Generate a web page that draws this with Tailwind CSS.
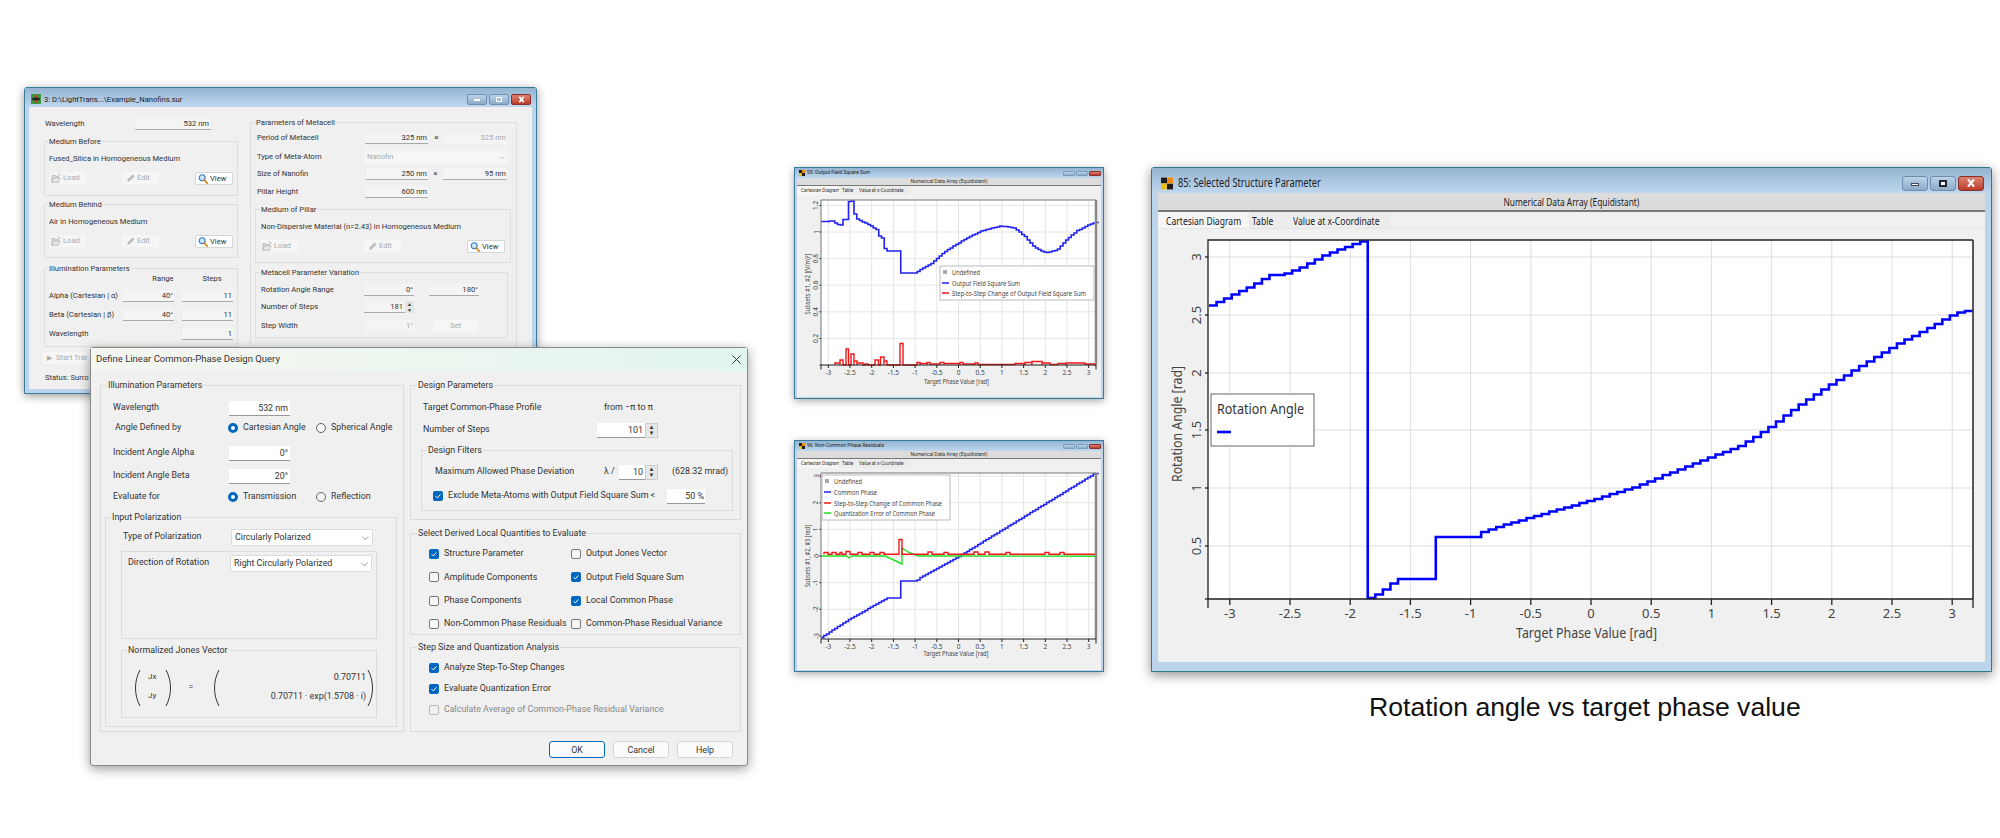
<!DOCTYPE html>
<html lang="en">
<head>
  <meta charset="UTF-8" />
  <title>Linear Common-Phase Design Query</title>
  <script src="https://cdn.jsdelivr.net/npm/@tailwindcss/browser@4"></script>
</head>
<body class="bg-white">
<svg class="hidden">
  <symbol id="folder" viewBox="0 0 12 12"><path d="M1 3h4l1 1h3v7H1z" fill="#d8d8d8" stroke="#aaa" stroke-width=".7"/><path d="M3 6h8l-2 5H1z" fill="#e6e6e6" stroke="#aaa" stroke-width=".7"/><path d="M8 1l3 1-1 2" fill="none" stroke="#bbb"/></symbol>
  <symbol id="pencil" viewBox="0 0 12 12"><path d="M2 10l1-3 6-6 2 2-6 6z" fill="#bdbdbd" stroke="#aaa" stroke-width=".6"/></symbol>
  <symbol id="lens" viewBox="0 0 12 12"><circle cx="5" cy="4.5" r="3.6" fill="#cfe6fb" stroke="#2a78c8" stroke-width="1.3"/><path d="M7.6 7.3l3.4 3.6" stroke="#d88a1c" stroke-width="2.2" stroke-linecap="round"/></symbol>
  <symbol id="check" viewBox="0 0 10 10"><path d="M2.6 5.2l1.7 1.7 3.1-3.5" fill="none" stroke="#fff" stroke-width="1"/></symbol>
  <symbol id="paren" viewBox="0 0 8 38" preserveAspectRatio="none"><path d="M7 1C1 12 1 26 7 37" fill="none" stroke="#333" stroke-width="1"/></symbol>
  <symbol id="appicon" viewBox="0 0 8 8"><rect width="8" height="8" fill="#fff"/><rect width="4" height="4" fill="#1d1d1d"/><rect x="4" y="4" width="4" height="4" fill="#1d1d1d"/><rect x="4" width="4" height="4" fill="#e8891a"/><rect y="4" width="4" height="4" fill="#e8c01a"/></symbol>
  <symbol id="closex" viewBox="0 0 10 8"><path d="M2.5 1l5 6M7.5 1l-5 6" stroke="#fff" stroke-width="1.8"/></symbol>
</svg>

<main class="relative w-[2000px] h-[838px] overflow-hidden bg-white font-['Roboto',sans-serif] text-[#333] whitespace-nowrap">

  <!-- back window: surface parameters -->
  <section class="absolute left-[24px] top-[87px] w-[513px] h-[307px] border border-[#3c7a99] rounded-t-[3px] bg-[#bcd4ec] shadow-[0_2px_10px_rgba(0,0,0,.4)] flex flex-col text-[7.6px]">
    <div class="h-[19px] shrink-0 bg-linear-to-b from-[#94b4d2] to-[#c0d7ee] flex items-center pt-[4px] pl-[6px] pr-[5px] justify-between">
      <div class="flex items-center gap-[3px] text-[7.6px] text-[#222]">
        <svg class="w-[10px] h-[10px]" viewBox="0 0 8 8"><rect width="8" height="8" fill="#3c9a3c"/><rect x="3" y="1" width="2" height="6" fill="#c9302c"/><rect x="1" y="3" width="6" height="2" fill="#222"/></svg>
        <span>3: D:\LightTrans...\Example_Nanofins.sur</span>
      </div>
      <div class="flex gap-[2px]">
        <span class="w-[20px] h-[11px] rounded-[2px] bg-linear-to-b from-[#bcd2e7] to-[#8dabca] border border-[#6f8db0] flex items-center justify-center"><span class="w-[6px] h-[2px] bg-white"></span></span>
        <span class="w-[20px] h-[11px] rounded-[2px] bg-linear-to-b from-[#bcd2e7] to-[#8dabca] border border-[#6f8db0] flex items-center justify-center"><span class="w-[6px] h-[5px] border border-white"></span></span>
        <span class="w-[20px] h-[11px] rounded-[2px] bg-linear-to-b from-[#db8272] to-[#b93a2a] border border-[#8c2f26] flex items-center justify-center"><svg class="w-[9px] h-[7px]"><use href="#closex"/></svg></span>
      </div>
    </div>
    <div class="mx-[4px] h-[282px] bg-[#f0f0f0] flex gap-[12px] pl-[15px]">
      <div class="w-[194px] shrink-0">
        <div class="flex items-center h-[12px] mt-[11px]">
          <span class="w-[91px] pl-[1px]">Wavelength</span>
          <span class="w-[76px] h-[12px] leading-[12px] text-right pr-[2px] bg-[#f4f4f4] border-b border-[#aaa]">532 nm</span>
        </div>

        <div class="relative mt-[11px] h-[55px] border border-[#dedede] pl-[4px]">
          <span class="absolute -top-[7px] left-[3px] bg-[#f0f0f0] px-[1px] leading-[13px]">Medium Before</span>
          <p class="mt-[11px] leading-[12px]">Fused_Silica in Homogeneous Medium</p>
          <div class="flex justify-between mt-[7px] mr-[4px] ml-[1px]">
            <span class="w-[36px] h-[12px] flex items-center gap-[2px] pl-[1px] bg-[#f6f6f6] text-[#aaa]"><svg class="w-[10px] h-[10px]"><use href="#folder"/></svg>Load</span>
            <span class="w-[37px] h-[12px] flex items-center gap-[2px] pl-[4px] bg-[#f6f6f6] text-[#aaa]"><svg class="w-[9px] h-[9px]"><use href="#pencil"/></svg>Edit</span>
            <span class="w-[38px] h-[13px] flex items-center gap-[2px] pl-[2px] bg-white border border-[#d5d5d5] rounded-[2px]"><svg class="w-[10px] h-[10px]"><use href="#lens"/></svg>View</span>
          </div>
        </div>

        <div class="relative mt-[8px] h-[54px] border border-[#dedede] pl-[4px]">
          <span class="absolute -top-[7px] left-[3px] bg-[#f0f0f0] px-[1px] leading-[13px]">Medium Behind</span>
          <p class="mt-[11px] leading-[12px]">Air in Homogeneous Medium</p>
          <div class="flex justify-between mt-[7px] mr-[4px] ml-[1px]">
            <span class="w-[36px] h-[12px] flex items-center gap-[2px] pl-[1px] bg-[#f6f6f6] text-[#aaa]"><svg class="w-[10px] h-[10px]"><use href="#folder"/></svg>Load</span>
            <span class="w-[37px] h-[12px] flex items-center gap-[2px] pl-[4px] bg-[#f6f6f6] text-[#aaa]"><svg class="w-[9px] h-[9px]"><use href="#pencil"/></svg>Edit</span>
            <span class="w-[38px] h-[13px] flex items-center gap-[2px] pl-[2px] bg-white border border-[#d5d5d5] rounded-[2px]"><svg class="w-[10px] h-[10px]"><use href="#lens"/></svg>View</span>
          </div>
        </div>

        <div class="relative mt-[10px] h-[79px] border border-[#dedede] pl-[4px]">
          <span class="absolute -top-[7px] left-[3px] bg-[#f0f0f0] px-[1px] leading-[13px]">Illumination Parameters</span>
          <div class="flex mt-[4px] h-[12px] leading-[12px]"><span class="ml-[94px] w-[40px] text-center">Range</span><span class="ml-[9px] w-[40px] text-center">Steps</span></div>
          <div class="flex items-center h-[12px] mt-[5px]"><span class="w-[74px]">Alpha (Cartesian | α)</span><span class="w-[51px] h-[12px] leading-[12px] text-right pr-[1px] bg-[#f4f4f4] border-b border-[#aaa]">40°</span><span class="ml-[8px] w-[51px] h-[12px] leading-[12px] text-right pr-[1px] bg-[#f4f4f4] border-b border-[#aaa]">11</span></div>
          <div class="flex items-center h-[12px] mt-[7px]"><span class="w-[74px]">Beta (Cartesian | β)</span><span class="w-[51px] h-[12px] leading-[12px] text-right pr-[1px] bg-[#f4f4f4] border-b border-[#aaa]">40°</span><span class="ml-[8px] w-[51px] h-[12px] leading-[12px] text-right pr-[1px] bg-[#f4f4f4] border-b border-[#aaa]">11</span></div>
          <div class="flex items-center h-[12px] mt-[7px]"><span class="w-[133px]">Wavelength</span><span class="w-[51px] h-[12px] leading-[12px] text-right pr-[1px] bg-[#f4f4f4] border-b border-[#aaa]">1</span></div>
        </div>

        <div class="mt-[5px] ml-[-1px] w-[60px] h-[12px] flex items-center gap-[4px] pl-[4px] bg-[#f6f6f6] text-[#aaa]"><span class="text-[7px]">▶</span><span>Start Trai</span></div>
        <p class="mt-[8px] ml-[1px] leading-[12px]">Status: Surro</p>
      </div>

      <div class="w-[267px] pt-[15px]">
        <div class="relative h-[235px] border border-[#dedede] pl-[6px]">
          <span class="absolute -top-[7px] left-[4px] bg-[#f0f0f0] px-[1px] leading-[13px]">Parameters of Metacell</span>
          <div class="flex items-center h-[12px] mt-[9px]"><span class="w-[108px]">Period of Metacell</span><span class="w-[63px] h-[12px] leading-[12px] text-right pr-[1px] bg-[#f4f4f4] border-b border-[#aaa]">325 nm</span><span class="w-[17px] text-center text-[8px]">×</span><span class="w-[62px] h-[12px] leading-[12px] text-right pr-[1px] bg-[#f4f4f4] text-[#aaa]">325 nm</span></div>
          <div class="flex items-center h-[12px] mt-[7px]"><span class="w-[108px]">Type of Meta-Atom</span><span class="w-[142px] h-[12px] leading-[12px] pl-[2px] bg-[#f6f6f6] text-[#aaa] flex justify-between pr-[2px]">Nanofin<span>⌵</span></span></div>
          <div class="flex items-center h-[12px] mt-[5px]"><span class="w-[109px]">Size of Nanofin</span><span class="w-[62px] h-[12px] leading-[12px] text-right pr-[1px] bg-[#f4f4f4] border-b border-[#aaa]">250 nm</span><span class="w-[15px] text-center text-[8px]">×</span><span class="w-[64px] h-[12px] leading-[12px] text-right pr-[1px] bg-[#f4f4f4] border-b border-[#aaa]">95 nm</span></div>
          <div class="flex items-center h-[12px] mt-[6px]"><span class="w-[108px]">Pillar Height</span><span class="w-[63px] h-[12px] leading-[12px] text-right pr-[1px] bg-[#f4f4f4] border-b border-[#aaa]">600 nm</span></div>

          <div class="relative mt-[11px] ml-[-2px] w-[256px] h-[54px] border border-[#dedede] pl-[5px]">
            <span class="absolute -top-[7px] left-[4px] bg-[#f0f0f0] px-[1px] leading-[13px]">Medium of Pillar</span>
            <p class="mt-[11px] leading-[12px]">Non-Dispersive Material (n=2.43) in Homogeneous Medium</p>
            <div class="flex justify-between mt-[7px] mr-[5px]">
              <span class="w-[37px] h-[12px] flex items-center gap-[2px] pl-[1px] bg-[#f6f6f6] text-[#aaa]"><svg class="w-[10px] h-[10px]"><use href="#folder"/></svg>Load</span>
              <span class="w-[37px] h-[12px] flex items-center gap-[2px] pl-[4px] bg-[#f6f6f6] text-[#aaa]"><svg class="w-[9px] h-[9px]"><use href="#pencil"/></svg>Edit</span>
              <span class="w-[38px] h-[13px] flex items-center gap-[2px] pl-[2px] bg-white border border-[#d5d5d5] rounded-[2px]"><svg class="w-[10px] h-[10px]"><use href="#lens"/></svg>View</span>
            </div>
          </div>

          <div class="relative mt-[9px] ml-[-2px] w-[253px] h-[66px] border border-[#dedede] pl-[5px]">
            <span class="absolute -top-[7px] left-[4px] bg-[#f0f0f0] px-[1px] leading-[13px]">Metacell Parameter Variation</span>
            <div class="flex items-center h-[12px] mt-[11px]"><span class="w-[103px]">Rotation Angle Range</span><span class="w-[50px] h-[12px] leading-[12px] text-right pr-[1px] bg-[#f4f4f4] border-b border-[#aaa]">0°</span><span class="ml-[15px] w-[50px] h-[12px] leading-[12px] text-right pr-[1px] bg-[#f4f4f4] border-b border-[#aaa]">180°</span></div>
            <div class="flex items-center h-[12px] mt-[5px]"><span class="w-[103px]">Number of Steps</span><span class="w-[41px] h-[12px] leading-[12px] text-right pr-[2px] bg-[#f4f4f4] border-b border-[#aaa]">181</span><span class="w-[9px] h-[12px] bg-[#e4e4e4] text-[5px] leading-[6px] text-center">▲<br>▼</span></div>
            <div class="flex items-center h-[12px] mt-[7px]"><span class="w-[103px]">Step Width</span><span class="w-[50px] h-[12px] leading-[12px] text-right pr-[1px] bg-[#f4f4f4] text-[#aaa]">1°</span><span class="ml-[19px] w-[45px] h-[12px] leading-[12px] text-center bg-[#f6f6f6] text-[#aaa]">Set</span></div>
          </div>
        </div>
      </div>
    </div>
  </section>

  <!-- design query dialog -->
  <section class="absolute left-[90px] top-[347px] w-[658px] h-[419px] border border-[#8a8a8a] rounded-[3px] bg-[#f0f0f0] shadow-[0_3px_12px_rgba(0,0,0,.4)] flex flex-col text-[8.9px]">
    <div class="h-[23px] shrink-0 bg-linear-to-r from-[#f5f6f0] to-[#e2f5ee] flex items-center justify-between pl-[5px] pr-[6px] text-[9.5px]">
      <span>Define Linear Common-Phase Design Query</span>
      <svg class="w-[9px] h-[9px]" viewBox="0 0 9 9"><path d="M.5.5l8 8M8.5.5l-8 8" stroke="#333" stroke-width="1"/></svg>
    </div>
    <div class="flex gap-[6px] pl-[9px] pt-[14px]">
      <div class="relative w-[304px] h-[347px] shrink-0 border border-[#dcdcdc]">
        <span class="absolute -top-[8px] left-[6px] bg-[#f0f0f0] px-[1px] leading-[14px]">Illumination Parameters</span>
        <div class="flex items-center h-[16px] mt-[14px] pl-[12px]"><span class="w-[116px]">Wavelength</span><span class="w-[61px] h-[15px] leading-[15px] text-right pr-[2px] bg-white border-b border-[#999]">532 nm</span></div>
        <div class="flex items-center h-[16px] mt-[4px] pl-[14px]"><span class="w-[113px]">Angle Defined by</span><span class="w-[10px] h-[10px] shrink-0 rounded-full border-[3px] border-[#0067c0] bg-white"></span><span class="ml-[5px] w-[73px]">Cartesian Angle</span><span class="w-[10px] h-[10px] shrink-0 rounded-full border border-[#666] bg-[#f6f6f6]"></span><span class="ml-[5px]">Spherical Angle</span></div>
        <div class="flex items-center h-[16px] mt-[9px] pl-[12px]"><span class="w-[116px]">Incident Angle Alpha</span><span class="w-[61px] h-[15px] leading-[15px] text-right pr-[2px] bg-white border-b border-[#999]">0°</span></div>
        <div class="flex items-center h-[16px] mt-[7px] pl-[12px]"><span class="w-[116px]">Incident Angle Beta</span><span class="w-[61px] h-[15px] leading-[15px] text-right pr-[2px] bg-white border-b border-[#999]">20°</span></div>
        <div class="flex items-center h-[16px] mt-[5px] pl-[12px]"><span class="w-[115px]">Evaluate for</span><span class="w-[10px] h-[10px] shrink-0 rounded-full border-[3px] border-[#0067c0] bg-white"></span><span class="ml-[5px] w-[73px]">Transmission</span><span class="w-[10px] h-[10px] shrink-0 rounded-full border border-[#666] bg-[#f6f6f6]"></span><span class="ml-[5px]">Reflection</span></div>

        <div class="relative mt-[12px] ml-[4px] w-[292px] h-[210px] border border-[#dcdcdc]">
          <span class="absolute -top-[8px] left-[5px] bg-[#f0f0f0] px-[1px] leading-[14px]">Input Polarization</span>
          <div class="flex items-center h-[16px] mt-[11px] pl-[17px]"><span class="w-[109px]">Type of Polarization</span><span class="w-[140px] h-[15px] leading-[15px] pl-[3px] pr-[3px] bg-white shadow-[0_0_1px_rgba(0,0,0,.5)] flex justify-between">Circularly Polarized<span>⌵</span></span></div>
          <div class="mt-[6px] ml-[15px] w-[256px] h-[88px] border border-[#dcdcdc]">
            <div class="flex items-center h-[16px] mt-[3px] pl-[6px]"><span class="w-[103px]">Direction of Rotation</span><span class="w-[140px] h-[15px] leading-[15px] pl-[3px] pr-[3px] bg-white shadow-[0_0_1px_rgba(0,0,0,.5)] flex justify-between">Right Circularly Polarized<span>⌵</span></span></div>
          </div>
          <div class="relative mt-[11px] ml-[15px] w-[256px] h-[68px] border border-[#dcdcdc] flex pl-[11px] pt-[18px]">
            <span class="absolute -top-[8px] left-[5px] bg-[#f0f0f0] px-[1px] leading-[14px]">Normalized Jones Vector</span>
            <svg class="w-[8px] h-[38px]"><use href="#paren"/></svg>
            <div class="ml-[7px] w-[14px] h-[38px] flex flex-col justify-between pt-[2px] pb-[5px] text-[8px] leading-[12px]"><span>Jx</span><span>Jy</span></div>
            <svg class="ml-[3px] w-[8px] h-[38px] -scale-x-100"><use href="#paren"/></svg>
            <span class="ml-[15px] w-[6px] h-[38px] leading-[36px] text-center">=</span>
            <svg class="ml-[18px] w-[8px] h-[38px]"><use href="#paren"/></svg>
            <div class="w-[146px] h-[38px] flex flex-col justify-between pt-[2px] pb-[5px] text-right leading-[12px]"><span>0.70711</span><span>0.70711 · exp(1.5708 · i)</span></div>
            <svg class="ml-[1px] w-[8px] h-[38px] -scale-x-100"><use href="#paren"/></svg>
          </div>
        </div>
      </div>

      <div class="w-[331px] flex flex-col">
        <div class="relative h-[135px] border border-[#dcdcdc]">
          <span class="absolute -top-[8px] left-[6px] bg-[#f0f0f0] px-[1px] leading-[14px]">Design Parameters</span>
          <div class="flex items-center h-[16px] mt-[14px] pl-[12px]"><span class="w-[181px]">Target Common-Phase Profile</span><span>from −π to π</span></div>
          <div class="flex items-center h-[16px] mt-[6px] pl-[12px]"><span class="w-[174px]">Number of Steps</span><span class="w-[48px] h-[15px] leading-[15px] text-right pr-[2px] bg-white border-b border-[#999]">101</span><span class="w-[13px] h-[15px] bg-[#e6e6e6] border border-[#ccc] text-[6px] leading-[6px] text-center">▲<br>▼</span></div>
          <div class="relative mt-[12px] ml-[10px] w-[312px] h-[61px] border border-[#dcdcdc]">
            <span class="absolute -top-[8px] left-[5px] bg-[#f0f0f0] px-[1px] leading-[14px]">Design Filters</span>
            <div class="flex items-center h-[16px] mt-[13px] pl-[13px]"><span class="w-[169px]">Maximum Allowed Phase Deviation</span><span class="w-[15px]">λ /</span><span class="w-[26px] h-[15px] leading-[15px] text-right pr-[2px] bg-white border-b border-[#999]">10</span><span class="w-[13px] h-[15px] bg-[#e6e6e6] border border-[#ccc] text-[6px] leading-[6px] text-center">▲<br>▼</span><span class="ml-[14px]">(628.32 mrad)</span></div>
            <div class="flex items-center h-[16px] mt-[8px] pl-[11px]"><svg class="w-[10px] h-[10px] shrink-0 rounded-[2px] bg-[#0067c0]"><use href="#check"/></svg><span class="ml-[5px] w-[219px]">Exclude Meta-Atoms with Output Field Square Sum &lt;</span><span class="w-[38px] h-[15px] leading-[15px] text-right pr-[1px] bg-white border-b border-[#999]">50 %</span></div>
          </div>
        </div>

        <div class="relative mt-[13px] h-[102px] border border-[#dcdcdc] grid grid-cols-[142px_1fr] gap-y-[5px] pt-[12px] pl-[18px]">
          <span class="absolute -top-[8px] left-[6px] bg-[#f0f0f0] px-[1px] leading-[14px]">Select Derived Local Quantities to Evaluate</span>
          <label class="flex items-center gap-[5px] h-[16px]"><svg class="w-[10px] h-[10px] shrink-0 rounded-[2px] bg-[#0067c0]"><use href="#check"/></svg>Structure Parameter</label>
          <label class="flex items-center gap-[5px] h-[16px]"><span class="w-[10px] h-[10px] shrink-0 rounded-[2px] border border-[#777] bg-[#f6f6f6]"></span>Output Jones Vector</label>
          <label class="flex items-center gap-[5px] h-[16px]"><span class="w-[10px] h-[10px] shrink-0 rounded-[2px] border border-[#777] bg-[#f6f6f6]"></span>Amplitude Components</label>
          <label class="flex items-center gap-[5px] h-[16px]"><svg class="w-[10px] h-[10px] shrink-0 rounded-[2px] bg-[#0067c0]"><use href="#check"/></svg>Output Field Square Sum</label>
          <label class="flex items-center gap-[5px] h-[16px]"><span class="w-[10px] h-[10px] shrink-0 rounded-[2px] border border-[#777] bg-[#f6f6f6]"></span>Phase Components</label>
          <label class="flex items-center gap-[5px] h-[16px]"><svg class="w-[10px] h-[10px] shrink-0 rounded-[2px] bg-[#0067c0]"><use href="#check"/></svg>Local Common Phase</label>
          <label class="flex items-center gap-[5px] h-[16px]"><span class="w-[10px] h-[10px] shrink-0 rounded-[2px] border border-[#777] bg-[#f6f6f6]"></span>Non-Common Phase Residuals</label>
          <label class="flex items-center gap-[5px] h-[16px]"><span class="w-[10px] h-[10px] shrink-0 rounded-[2px] border border-[#777] bg-[#f6f6f6]"></span>Common-Phase Residual Variance</label>
        </div>

        <div class="relative mt-[12px] h-[85px] border border-[#dcdcdc] flex flex-col gap-[5px] pt-[12px] pl-[18px]">
          <span class="absolute -top-[8px] left-[6px] bg-[#f0f0f0] px-[1px] leading-[14px]">Step Size and Quantization Analysis</span>
          <label class="flex items-center gap-[5px] h-[16px]"><svg class="w-[10px] h-[10px] shrink-0 rounded-[2px] bg-[#0067c0]"><use href="#check"/></svg>Analyze Step-To-Step Changes</label>
          <label class="flex items-center gap-[5px] h-[16px]"><svg class="w-[10px] h-[10px] shrink-0 rounded-[2px] bg-[#0067c0]"><use href="#check"/></svg>Evaluate Quantization Error</label>
          <label class="flex items-center gap-[5px] h-[16px] text-[#888]"><span class="w-[10px] h-[10px] shrink-0 rounded-[2px] border border-[#bbb] bg-[#f0f0f0]"></span>Calculate Average of Common-Phase Residual Variance</label>
        </div>
      </div>
    </div>
    <div class="flex justify-end gap-[8px] mt-[9px] pr-[14px]">
      <button class="w-[56px] h-[17px] rounded-[3px] border border-[#0067c0] bg-[#fbfbfb] leading-[14px]">OK</button>
      <button class="w-[56px] h-[17px] rounded-[3px] border border-[#d5d5d5] bg-[#fbfbfb] leading-[14px]">Cancel</button>
      <button class="w-[56px] h-[17px] rounded-[3px] border border-[#d5d5d5] bg-[#fbfbfb] leading-[14px]">Help</button>
    </div>
  </section>

  <!-- small chart: output field square sum -->
  <section class="absolute left-[794px] top-[167px] w-[310px] h-[232px] border border-[#3c7a99] bg-[#bcd4ec] shadow-[0_2px_8px_rgba(0,0,0,.35)] flex flex-col">
    <div class="h-[10px] shrink-0 bg-linear-to-b from-[#94b4d2] to-[#c0d7ee] flex items-center justify-between pl-[4px] pr-[2px] text-[5px] text-[#222]">
      <div class="flex items-center gap-[2px]"><svg class="w-[6px] h-[6px]"><use href="#appicon"/></svg><span>95: Output Field Square Sum</span></div>
      <div class="flex gap-[1px]">
        <span class="w-[12px] h-[5px] rounded-[1px] bg-linear-to-b from-[#bcd2e7] to-[#8dabca] border border-[#7a9dbf]"></span>
        <span class="w-[12px] h-[5px] rounded-[1px] bg-linear-to-b from-[#bcd2e7] to-[#8dabca] border border-[#7a9dbf]"></span>
        <span class="w-[12px] h-[5px] rounded-[1px] bg-linear-to-b from-[#db8272] to-[#b93a2a] border border-[#8c2f26]"></span>
      </div>
    </div>
    <div class="mx-[2px] h-[219px] bg-[#f0f0f0] flex flex-col">
      <div class="h-[8px] shrink-0 bg-[#dcdcdc] border-b border-[#777] text-center text-[5px] leading-[7px]">Numerical Data Array (Equidistant)</div>
      <div class="h-[9px] shrink-0 flex text-[4.7px] leading-[9px]"><span class="w-[42px] pl-[4px] bg-[#f6f6f6]">Cartesian Diagram</span><span class="w-[19px] pl-[3px] bg-[#ececec]">Table</span><span class="w-[52px] pl-[1px] bg-[#ececec]">Value at x-Coordinate</span></div>
      <svg id="chart95" class="w-[304px] h-[200px] font-['Noto_Sans',sans-serif]" viewBox="797 196 304 200"></svg>
    </div>
  </section>

  <!-- small chart: non-common phase residuals -->
  <section class="absolute left-[794px] top-[440px] w-[310px] h-[232px] border border-[#3c7a99] bg-[#bcd4ec] shadow-[0_2px_8px_rgba(0,0,0,.35)] flex flex-col">
    <div class="h-[10px] shrink-0 bg-linear-to-b from-[#94b4d2] to-[#c0d7ee] flex items-center justify-between pl-[4px] pr-[2px] text-[5px] text-[#222]">
      <div class="flex items-center gap-[2px]"><svg class="w-[6px] h-[6px]"><use href="#appicon"/></svg><span>96: Non-Common Phase Residuals</span></div>
      <div class="flex gap-[1px]">
        <span class="w-[12px] h-[5px] rounded-[1px] bg-linear-to-b from-[#bcd2e7] to-[#8dabca] border border-[#7a9dbf]"></span>
        <span class="w-[12px] h-[5px] rounded-[1px] bg-linear-to-b from-[#bcd2e7] to-[#8dabca] border border-[#7a9dbf]"></span>
        <span class="w-[12px] h-[5px] rounded-[1px] bg-linear-to-b from-[#db8272] to-[#b93a2a] border border-[#8c2f26]"></span>
      </div>
    </div>
    <div class="mx-[2px] h-[219px] bg-[#f0f0f0] flex flex-col">
      <div class="h-[8px] shrink-0 bg-[#dcdcdc] border-b border-[#777] text-center text-[5px] leading-[7px]">Numerical Data Array (Equidistant)</div>
      <div class="h-[9px] shrink-0 flex text-[4.7px] leading-[9px]"><span class="w-[42px] pl-[4px] bg-[#f6f6f6]">Cartesian Diagram</span><span class="w-[19px] pl-[3px] bg-[#ececec]">Table</span><span class="w-[52px] pl-[1px] bg-[#ececec]">Value at x-Coordinate</span></div>
      <svg id="chart96" class="w-[304px] h-[200px] font-['Noto_Sans',sans-serif]" viewBox="797 469 304 200"></svg>
    </div>
  </section>

  <!-- big chart: selected structure parameter -->
  <section class="absolute left-[1151px] top-[167px] w-[841px] h-[505px] border border-[#2d7a8c] rounded-t-[3px] bg-[#bcd4ec] shadow-[0_3px_12px_rgba(0,0,0,.45)] flex flex-col">
    <div class="h-[25px] shrink-0 bg-linear-to-b from-[#94b4d2] to-[#c0d7ee] flex items-center justify-between pt-[5px] pl-[9px] pr-[7px]">
      <div class="flex items-center gap-[5px]">
        <svg class="w-[12px] h-[13px]" preserveAspectRatio="none"><use href="#appicon"/></svg>
        <span class="text-[12px] text-[#222] origin-left scale-x-[.77] font-['Noto_Sans',sans-serif]">85: Selected Structure Parameter</span>
      </div>
      <div class="flex gap-[2px]">
        <span class="w-[26px] h-[15px] rounded-[3px] bg-linear-to-b from-[#bcd2e7] to-[#8dabca] border border-[#6f8db0] flex items-center justify-center"><span class="w-[8px] h-[3px] mt-[3px] bg-white border border-[#446]"></span></span>
        <span class="w-[26px] h-[15px] rounded-[3px] bg-linear-to-b from-[#bcd2e7] to-[#8dabca] border border-[#6f8db0] flex items-center justify-center"><span class="w-[8px] h-[7px] border-2 border-[#223] bg-white"></span></span>
        <span class="w-[26px] h-[15px] rounded-[3px] bg-linear-to-b from-[#db8272] to-[#b93a2a] border border-[#8c2f26] flex items-center justify-center"><svg class="w-[12px] h-[10px]"><use href="#closex"/></svg></span>
      </div>
    </div>
    <div class="mx-[6px] h-[469px] bg-[#f0f0f0] flex flex-col font-['Noto_Sans',sans-serif]">
      <div class="h-[19px] shrink-0 bg-[#dcdcdc] border-b-2 border-[#777] text-center text-[11px] leading-[17px] text-[#222]"><span class="inline-block scale-x-[.76]">Numerical Data Array (Equidistant)</span></div>
      <div class="h-[17px] shrink-0 flex text-[11px] leading-[17px] border-b border-[#e6e6e6] text-[#222]">
        <span class="w-[91px] pl-[8px] bg-[#f6f6f6]"><span class="inline-block origin-left scale-x-[.78]">Cartesian Diagram</span></span>
        <span class="w-[39px] pl-[3px] bg-[#ececec]"><span class="inline-block origin-left scale-x-[.78]">Table</span></span>
        <span class="w-[102px] pl-[5px] bg-[#ececec]"><span class="inline-block origin-left scale-x-[.78]">Value at x-Coordinate</span></span>
      </div>
      <svg id="chart85" class="w-[827px] h-[431px]" viewBox="1158 229 827 431"></svg>
    </div>
  </section>

  <p class="absolute left-[1369px] top-[691px] font-['Liberation_Sans',sans-serif] text-[26.6px] leading-[32px] text-[#111]">Rotation angle vs target phase value</p>
</main>

<script>
  const NS = 'http://www.w3.org/2000/svg';

  function add(svg, tag, attrs, text) {
    const el = document.createElementNS(NS, tag);
    for (const k in attrs) el.setAttribute(k, attrs[k]);
    if (text !== undefined) el.textContent = text;
    svg.appendChild(el);
    return el;
  }

  function interp(cps, x) {
    if (x <= cps[0][0]) return cps[0][1];
    for (let i = 1; i < cps.length; i++) {
      if (x <= cps[i][0]) {
        const a = cps[i - 1], b = cps[i];
        return a[1] + (b[1] - a[1]) * (x - a[0]) / (b[0] - a[0]);
      }
    }
    return cps[cps.length - 1][1];
  }

  // data arrays have 101 equidistant samples, drawn as steps
  function stairs(cps, x0, step) {
    let d = '';
    for (let k = 0; k <= 100; k++) {
      const y = Math.round(interp(cps, x0 + (k + 0.5) * step) * 2) / 2;
      d += (k === 0 ? 'M' + x0 + ' ' + y : 'V' + y) + 'H' + (x0 + (k + 1) * step);
    }
    return d;
  }

  function boxes(base, list) {
    let d = 'M' + list[0][0] + ' ' + base;
    for (const [a, b, y] of list) d += 'H' + a + 'V' + y + 'H' + b + 'V' + base;
    return d;
  }

  function frame(svg, c) {
    add(svg, 'rect', { x: c.l, y: c.t, width: c.r - c.l, height: c.b - c.t, fill: '#fff' });
    for (let v = -3; v <= 3.01; v += 0.5) {
      const x = c.x0 + v * c.xu;
      add(svg, 'line', { x1: x, x2: x, y1: c.t, y2: c.b, stroke: '#dedede', 'stroke-width': c.grid });
    }
    for (const [y] of c.yTicks) add(svg, 'line', { x1: c.l, x2: c.r, y1: y, y2: y, stroke: '#dedede', 'stroke-width': c.grid });
  }

  function axes(svg, c) {
    add(svg, 'path', { d: `M${c.l} ${c.b}V${c.t}H${c.r}`, fill: 'none', stroke: c.axis, 'stroke-width': c.axisW });
    add(svg, 'line', { x1: c.r, x2: c.r, y1: c.t, y2: c.b, stroke: c.rightColor, 'stroke-width': c.rightW });
    add(svg, 'line', { x1: c.l, x2: c.r, y1: c.b, y2: c.b, stroke: '#222', 'stroke-width': c.axisW });
    for (let v = -3; v <= 3.01; v += 0.5) {
      const x = c.x0 + v * c.xu;
      add(svg, 'line', { x1: x, x2: x, y1: c.b, y2: c.b + c.tick, stroke: '#222', 'stroke-width': c.axisW });
      const label = String(Math.round(v * 10) / 10);
      add(svg, 'text', { x: x, y: c.xLabelY, 'font-size': c.fs, 'text-anchor': 'middle', 'dominant-baseline': 'central', fill: '#444' }, label);
    }
    for (const x of [c.l, c.r]) add(svg, 'line', { x1: x, x2: x, y1: c.b, y2: c.b + c.tick * 1.5, stroke: '#222', 'stroke-width': c.axisW });
    for (const [y, label] of c.yTicks) {
      add(svg, 'line', { x1: c.l - c.tick / 2, x2: c.l, y1: y, y2: y, stroke: '#222', 'stroke-width': c.axisW });
      if (label) add(svg, 'text', { x: c.yLabelX, y: y, 'font-size': c.fs, 'text-anchor': 'middle', 'dominant-baseline': 'central', fill: '#444', transform: `rotate(-90 ${c.yLabelX} ${y})` }, label);
    }
    add(svg, 'text', { x: c.xTitle[1], y: c.xTitle[2], 'font-size': c.titleFs, 'text-anchor': 'middle', 'dominant-baseline': 'central', fill: '#444', textLength: c.xTitle[3], lengthAdjust: 'spacingAndGlyphs' }, c.xTitle[0]);
    const [t, tx, ty, tl] = c.yTitle;
    add(svg, 'text', { x: tx, y: ty, 'font-size': c.titleFs, 'text-anchor': 'middle', 'dominant-baseline': 'central', fill: '#444', textLength: tl, lengthAdjust: 'spacingAndGlyphs', transform: `rotate(-90 ${tx} ${ty})` }, t);
  }

  function legend(svg, box, fs, tx, rows) {
    add(svg, 'rect', { x: box[0], y: box[1], width: box[2], height: box[3], fill: '#fff', stroke: '#bbb', 'stroke-width': 1 });
    for (const [color, label, y, len] of rows) {
      if (color) add(svg, 'line', { x1: box[0] + 2, x2: tx - 3, y1: y, y2: y, stroke: color, 'stroke-width': 1.5 });
      else add(svg, 'rect', { x: box[0] + 3, y: y - 2, width: 4, height: 4, fill: '#aaa' });
      add(svg, 'text', { x: tx, y: y, 'font-size': fs, 'dominant-baseline': 'central', fill: '#444', textLength: len, lengthAdjust: 'spacingAndGlyphs' }, label);
    }
  }

  // ---- chart 85, big one
  const big = {
    l: 1208, r: 1973, t: 240, b: 599, x0: 1591, xu: 120.4, grid: 1, axis: '#222', axisW: 1.3, rightColor: '#222', rightW: 1.5, tick: 6,
    fs: 13, titleFs: 14, xLabelY: 613, yLabelX: 1196,
    yTicks: [[257, '3'], [315, '2.5'], [373, '2'], [430, '1.5'], [488, '1'], [546, '0.5'], [599, '']],
    xTitle: ['Target Phase Value [rad]', 1586.5, 632, 141], yTitle: ['Rotation Angle [rad]', 1176, 424, 116]
  };
  const svg85 = document.getElementById('chart85');
  frame(svg85, big);
  const rotation = [[1208, 308], [1230.6, 297], [1254, 286], [1272, 275], [1285, 275], [1305, 267], [1327, 255], [1359.5, 243], [1367.9, 240],
    [1368, 599], [1376, 597], [1384, 591], [1391, 587], [1398, 579], [1435.9, 579], [1436, 537], [1480.9, 537], [1481, 533], [1513, 523], [1552, 512], [1591, 501],
    [1637, 487], [1672, 473], [1711, 458], [1744, 445], [1771, 428], [1799, 407], [1831.5, 385], [1870, 362], [1900, 344], [1933, 327], [1958, 313], [1973, 310]];
  add(svg85, 'path', { d: stairs(rotation, 1209, 7.56), fill: 'none', stroke: '#0000ff', 'stroke-width': 2.6 });
  axes(svg85, big);
  add(svg85, 'rect', { x: 1211, y: 394, width: 103, height: 52, fill: '#fff', stroke: '#999', 'stroke-width': 1.5 });
  add(svg85, 'text', { x: 1217, y: 408, 'font-size': 15, 'dominant-baseline': 'central', fill: '#333', textLength: 87, lengthAdjust: 'spacingAndGlyphs' }, 'Rotation Angle');
  add(svg85, 'line', { x1: 1217, x2: 1231, y1: 432, y2: 432, stroke: '#0000ff', 'stroke-width': 2.6 });

  // ---- chart 95
  const small = { l: 821, r: 1096, grid: 0.8, axis: '#777', axisW: 1, rightColor: '#888', rightW: 2.5, tick: 3, fs: 6.5, titleFs: 6.5, x0: 958.5, xu: 43.4 };
  const c95 = Object.assign({}, small, {
    t: 201, b: 366, xLabelY: 373, yLabelX: 816,
    yTicks: [[206.4, '1.2'], [233, '1'], [259.6, '0.8'], [286.2, '0.6'], [312.8, '0.4'], [339.4, '0.2'], [366, '']],
    xTitle: ['Target Phase Value [rad]', 956.5, 382, 65], yTitle: ['Subsets #1, #2 [(V/m)²]', 807, 285, 61]
  });
  const svg95 = document.getElementById('chart95');
  frame(svg95, c95);
  const fieldSum = [[821, 222.7], [833, 222], [840, 226], [842.9, 226], [843, 220.7], [847.9, 220.7], [848, 203], [853.9, 201.7], [854, 212], [858, 220], [868, 225], [878, 230.7], [880, 237], [884, 240],
    [884.5, 247], [886.7, 252], [901.9, 252], [902, 274], [918, 274], [919, 271.7], [931.7, 265], [945, 253], [965, 240.7], [981.7, 232], [1001.7, 227], [1015, 229], [1025, 236.7], [1035, 248], [1046.7, 254], [1058, 251], [1068, 240], [1078, 231.7], [1088, 226.7], [1096, 223.3]];
  add(svg95, 'path', { d: stairs(fieldSum, 821, 2.75), fill: 'none', stroke: '#2020f0', 'stroke-width': 1.6 });
  const step95 = [[835, 840, 364], [840, 843, 361], [843, 846, 366], [846, 848.5, 350], [848.5, 851, 366], [851, 854, 355], [854, 857, 362], [857, 863, 364], [865, 868, 365], [875, 878.5, 361], [880.5, 884, 358], [884, 887, 362], [900, 903, 344.5], [917, 920, 363.5], [920, 927, 364.5], [927, 930, 363.5], [930, 940, 365], [940, 944, 363.5], [944, 960, 364.5], [960, 963, 363.5], [963, 975, 365], [975, 978, 364], [978, 1015, 365.5], [1015, 1025, 364.5], [1025, 1032, 363.5], [1032, 1042, 362.5], [1042, 1050, 364], [1050, 1058, 365.5], [1058, 1066, 364.5], [1066, 1085, 364], [1085, 1095, 365]];
  add(svg95, 'path', { d: boxes(366, step95) + 'H1096', fill: 'none', stroke: '#f01818', 'stroke-width': 1.4 });
  axes(svg95, c95);
  legend(svg95, [940, 267, 154, 34], 6.3, 952, [
    [null, 'Undefined', 273, 28], ['#2020f0', 'Output Field Square Sum', 284, 68], ['#f01818', 'Step-to-Step Change of Output Field Square Sum', 294, 134]
  ]);

  // ---- chart 96
  const c96 = Object.assign({}, small, {
    t: 474, b: 640, xLabelY: 647, yLabelX: 816,
    yTicks: [[477, '3'], [503.7, '2'], [530.3, '1'], [557, '0'], [583.7, '-1'], [610.3, '-2'], [637, '-3']],
    xTitle: ['Target Phase Value [rad]', 956, 654.5, 65], yTitle: ['Subsets #1, #2, #3 [rad]', 807, 557, 62]
  });
  const svg96 = document.getElementById('chart96');
  frame(svg96, c96);
  const commonPhase = [[821, 639.3], [848, 621.7], [888, 599], [901.9, 598.7], [902, 582], [918.2, 582], [919, 580], [958.3, 558.3], [1096, 474.3]];
  add(svg96, 'path', { d: stairs(commonPhase, 821, 2.75), fill: 'none', stroke: '#2020f0', 'stroke-width': 1.6 });
  const quantError = 'M821 557H846L849 559L852 557H885L896 562L902 565V549L908 553L918 557H935L1096 557.3';
  add(svg96, 'path', { d: quantError, fill: 'none', stroke: '#20e020', 'stroke-width': 1.4 });
  const step96 = [[824, 828, 553.5], [832, 836, 553.5], [840, 842, 553.5], [846, 850, 552.5], [858, 862, 553.5], [870, 874, 553.5], [880, 884, 553.5], [899, 902, 540.5], [928, 932, 553], [944, 948, 553.5], [974, 978, 553], [985, 989, 553], [1006, 1010, 553.5], [1045, 1049, 553.5], [1060, 1064, 553.5]];
  add(svg96, 'path', { d: boxes(555.3, step96) + 'H1095', fill: 'none', stroke: '#f01818', 'stroke-width': 1.4 });
  axes(svg96, c96);
  legend(svg96, [822, 476, 128, 45], 6.3, 834, [
    [null, 'Undefined', 482, 28], ['#2020f0', 'Common Phase', 493, 43], ['#f01818', 'Step-to-Step Change of Common Phase', 504, 108], ['#20e020', 'Quantization Error of Common Phase', 514, 101]
  ]);
</script>
</body>
</html>
